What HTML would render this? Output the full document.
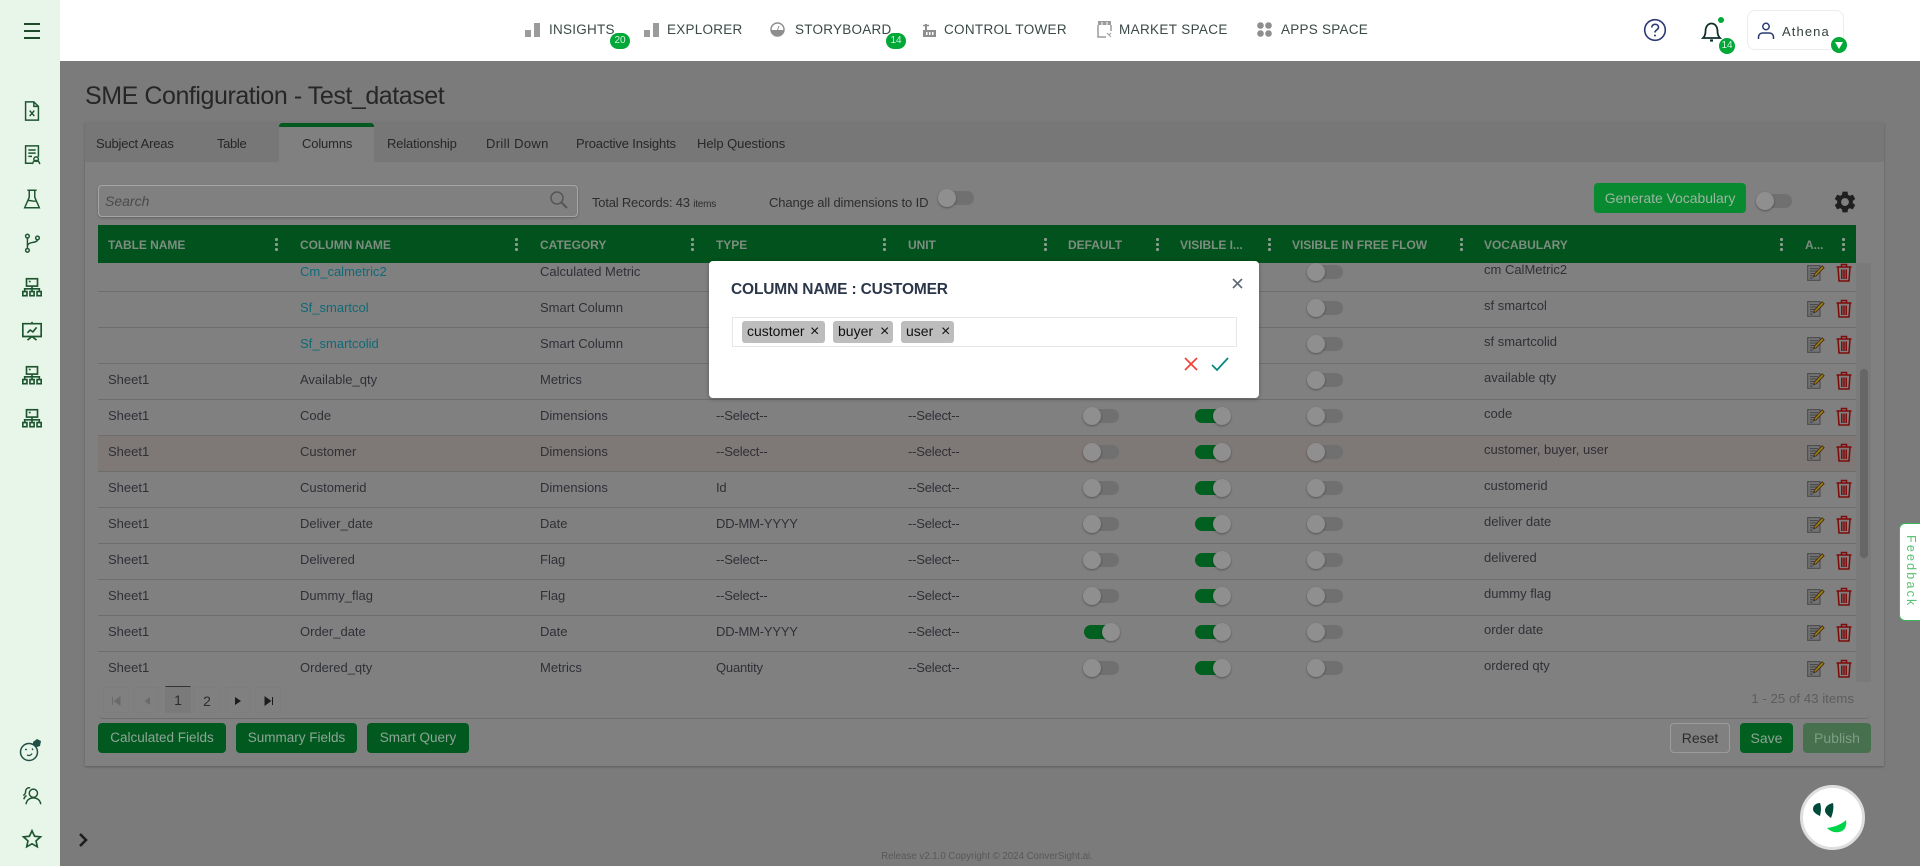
<!DOCTYPE html>
<html lang="en"><head><meta charset="utf-8"><title>SME Configuration</title>
<style>
*{box-sizing:border-box}
html,body{margin:0;padding:0;width:1920px;height:866px;overflow:hidden;background:#7b7b7b;font-family:"Liberation Sans",sans-serif}
.a{position:absolute;white-space:nowrap}
#side{left:0;top:0;width:60px;height:866px;background:#e8f5e9}
#head{left:0;top:0;width:1920px;height:61px;background:#fff}
.nav{top:21px;font-size:13.5px;line-height:18px;color:#3b4a47;letter-spacing:.25px}
.badge{background:#00a838;color:#d5f0dc;font-size:10px;line-height:16px;height:16px;width:20px;border-radius:8px;text-align:center}
.panel{left:85px;top:122px;width:1799px;height:644px;background:#808080;box-shadow:0 1px 2px rgba(0,0,0,.25)}
.tabbar{left:85px;top:122px;width:1799px;height:40px;background:#777}
.tab{top:135px;font-size:13px;line-height:18px;color:#272727;letter-spacing:-.15px}
.hd{left:98px;top:225px;width:1758px;height:38px;background:#01521c}
.ht{top:237px;font-size:12px;line-height:16px;font-weight:700;color:#7d8d80;letter-spacing:-.05px}
.dots{top:238px;width:3px;height:13px;background:radial-gradient(circle 1.5px at 1.5px 1.5px,#8a9a8e 98%,transparent) 0 0/3px 5px repeat-y}
#body{left:98px;top:263px;width:1758px;height:419px;overflow:hidden}
.r{position:absolute;left:0;width:1758px;height:36px;border-top:1.5px solid #6e6e6e;color:#2f3036;font-size:13px}
.r span{position:absolute;top:8px;line-height:16px;white-space:nowrap}
.c1{left:10px}.c2{left:202px}.c3{left:442px}.c4{left:618px;letter-spacing:-.2px}.c5{left:810px;letter-spacing:-.2px}
.r span.c6{left:1386px;top:6px}
.lk{color:#0f6a78}
.hl{background:#7e7876}
.t{position:absolute;top:9px;width:35px;height:14px;border-radius:7px;background:#707070}
.t i{position:absolute;left:-1px;top:-2px;width:18px;height:18px;border-radius:50%;background:#8f8f8f;box-shadow:0 1px 2px rgba(0,0,0,.35)}
.t.on{background:#015f1f}
.t.on i{left:18px}
.t1{left:986px}.t2{left:1097px}.t3{left:1210px}
.ed{position:absolute;left:1709px;top:7px;width:18px;height:18px}
.tr{position:absolute;left:1738px;top:7px;width:16px;height:19px}
.btn{height:30px;line-height:30px;border-radius:4px;text-align:center;font-size:14px;background:#01591f;color:#8fa596}
.pg{top:687px;width:26px;height:26px;border:1px solid #7d7d7d;text-align:center;line-height:26px;font-size:14px;color:#2c2c2c}
.chip{top:321px;height:22px;background:#bdbdbd;border-radius:3px;font-size:14px;line-height:21px;color:#111;padding-left:5px}
.chip b{position:absolute;top:0;font-weight:400;font-size:16px}
svg{display:block;overflow:visible}
.si{position:absolute;left:21px;width:22px;height:22px;fill:none;stroke:#1d5530;stroke-width:1.6}
</style></head><body>

<svg width="0" height="0" style="position:absolute">
<defs>
<symbol id="org" viewBox="0 0 24 24"><g fill="none" stroke="#1d5530" stroke-width="1.8"><rect x="6" y="3" width="12" height="8"/><path d="M12 11v3M4 17v-3h16v3M12 14v3"/><rect x="2" y="17" width="4.5" height="4.5"/><rect x="9.8" y="17" width="4.5" height="4.5"/><rect x="17.5" y="17" width="4.5" height="4.5"/><path d="M8.5 6h2"/></g></symbol>
<symbol id="edit" viewBox="0 0 19 19"><rect x=".7" y="2.7" width="13" height="15.6" fill="#737373" stroke="#4d4d4d" stroke-width="1.2"/><path d="M3 6h9M3 8.500h8M3 11h5M3 13.500h4M3 16h3" stroke="#3d3d3d" stroke-width="1"/><path d="M7 14.500l1-3L16 3l2 2-8.500 8.500z" fill="#9a8410" stroke="#4a2f18" stroke-width="1"/></symbol>
<symbol id="trash" viewBox="0 0 16 19"><g fill="none" stroke="#7e0a0a" stroke-width="1.500"><path d="M.5 4h15M5.500 4V1.500h5V4M2 4.500l1 13.500h10l1-13.500M5.800 6.500v9.500M8 6.500v9.500M10.200 6.500v9.500"/></g></symbol>
</defs></svg>

<div class="a" id="bg" style="left:60px;top:61px;width:1860px;height:805px;background:#7b7b7b"></div>
<div class="a panel"></div>
<div class="a tabbar"></div>
<div class="a" style="left:279px;top:123px;width:95px;height:39px;background:#808080"></div>
<div class="a" style="left:279px;top:123px;width:95px;height:4px;background:#01591f;border-radius:3px 3px 0 0"></div>

<div class="a" style="left:85px;top:80px;font-size:25px;line-height:32px;color:#262626;letter-spacing:-.44px">SME Configuration - Test_dataset</div>

<div class="a tab" style="left:96px;letter-spacing:-.2px">Subject Areas</div>
<div class="a tab" style="left:217px;letter-spacing:-.35px">Table</div>
<div class="a tab" style="left:302px">Columns</div>
<div class="a tab" style="left:387px">Relationship</div>
<div class="a tab" style="left:486px;letter-spacing:.35px">Drill Down</div>
<div class="a tab" style="left:576px">Proactive Insights</div>
<div class="a tab" style="left:697px;letter-spacing:-.05px">Help Questions</div>

<div class="a" style="left:98px;top:185px;width:480px;height:32px;border:1px solid #a5a5a5;border-radius:4px;box-shadow:0 1px 2px rgba(0,0,0,.25)"></div>
<div class="a" style="left:105px;top:192px;font-size:14px;line-height:18px;font-style:italic;color:#4a4a4a">Search</div>
<svg class="a" style="left:549px;top:190px" width="20" height="20" viewBox="0 0 20 20"><circle cx="8" cy="8" r="6" fill="none" stroke="#555" stroke-width="1.500"/><path d="M12.500 12.500L18 18" stroke="#555" stroke-width="2"/></svg>
<div class="a" style="left:592px;top:194px;font-size:13px;line-height:18px;color:#2d2d2d;letter-spacing:-.2px">Total Records: 43 <span style="font-size:10px">items</span></div>
<div class="a" style="left:769px;top:194px;font-size:13px;line-height:18px;color:#2d2d2d;letter-spacing:-.12px">Change all dimensions to ID</div>
<div class="a" style="left:939px;top:191px;width:35px;height:14px;border-radius:7px;background:#707070"></div>
<div class="a" style="left:938px;top:189px;width:18px;height:18px;border-radius:50%;background:#8f8f8f;box-shadow:0 1px 2px rgba(0,0,0,.35)"></div>

<div class="a btn" style="left:1594px;top:183px;width:152px;background:#088a30;color:#9cb5a2;letter-spacing:-.05px">Generate Vocabulary</div>
<div class="a" style="left:1757px;top:194px;width:35px;height:14px;border-radius:7px;background:#707070"></div>
<div class="a" style="left:1756px;top:192px;width:18px;height:18px;border-radius:50%;background:#8f8f8f;box-shadow:0 1px 2px rgba(0,0,0,.35)"></div>
<svg class="a" style="left:1832px;top:189px" width="26" height="26" viewBox="0 0 24 24"><path fill="#1f1f1f" d="M19.140 12.940c.04-.3.06-.61.06-.94 0-.32-.02-.64-.07-.94l2.030-1.580c.18-.14.23-.41.12-.61l-1.920-3.320c-.12-.22-.37-.29-.59-.22l-2.390.96c-.5-.38-1.030-.7-1.620-.94l-.36-2.540c-.04-.24-.24-.41-.48-.41h-3.840c-.24 0-.43.17-.47.41l-.36 2.540c-.59.24-1.130.57-1.620.94l-2.390-.96c-.22-.08-.47 0-.59.22L2.740 8.870c-.12.21-.08.47.12.61l2.030 1.580c-.05.3-.09.63-.09.94s.02.64.07.94l-2.030 1.580c-.18.14-.23.41-.12.61l1.920 3.320c.12.22.37.29.59.22l2.390-.96c.5.38 1.030.7 1.620.94l.36 2.540c.05.24.24.41.48.41h3.840c.24 0 .44-.17.47-.41l.36-2.540c.59-.24 1.130-.56 1.620-.94l2.390.96c.22.08.47 0 .59-.22l1.920-3.320c.12-.22.07-.47-.12-.61l-2.010-1.580zM12 15.600c-1.980 0-3.600-1.620-3.600-3.600s1.620-3.600 3.600-3.600 3.600 1.620 3.600 3.600-1.620 3.600-3.600 3.600z"/></svg>

<div class="a hd"></div>
<div class="a ht" style="left:108px">TABLE NAME</div><div class="a dots" style="left:275px"></div>
<div class="a ht" style="left:300px">COLUMN NAME</div><div class="a dots" style="left:515px"></div>
<div class="a ht" style="left:540px">CATEGORY</div><div class="a dots" style="left:691px"></div>
<div class="a ht" style="left:716px">TYPE</div><div class="a dots" style="left:883px"></div>
<div class="a ht" style="left:908px">UNIT</div><div class="a dots" style="left:1044px"></div>
<div class="a ht" style="left:1068px">DEFAULT</div><div class="a dots" style="left:1156px"></div>
<div class="a ht" style="left:1180px">VISIBLE I...</div><div class="a dots" style="left:1268px"></div>
<div class="a ht" style="left:1292px">VISIBLE IN FREE FLOW</div><div class="a dots" style="left:1460px"></div>
<div class="a ht" style="left:1484px">VOCABULARY</div><div class="a dots" style="left:1780px"></div>
<div class="a ht" style="left:1805px">A...</div><div class="a dots" style="left:1842px"></div>

<div class="a" style="left:1856px;top:263px;width:15px;height:420px;background:#7a7a7a"></div>
<div class="a" style="left:1860px;top:369px;width:8px;height:189px;border-radius:4px;background:#666"></div>

<div class="a" id="body">
<div class="r" style="top:-8px"><span class="c2 lk">Cm_calmetric2</span><span class="c3">Calculated Metric</span><span class="c6">cm CalMetric2</span><div class="t t3"><i></i></div><svg class="ed"><use href="#edit"/></svg><svg class="tr"><use href="#trash"/></svg></div>
<div class="r" style="top:28px"><span class="c2 lk">Sf_smartcol</span><span class="c3">Smart Column</span><span class="c6">sf smartcol</span><div class="t t3"><i></i></div><svg class="ed"><use href="#edit"/></svg><svg class="tr"><use href="#trash"/></svg></div>
<div class="r" style="top:64px"><span class="c2 lk">Sf_smartcolid</span><span class="c3">Smart Column</span><span class="c6">sf smartcolid</span><div class="t t3"><i></i></div><svg class="ed"><use href="#edit"/></svg><svg class="tr"><use href="#trash"/></svg></div>
<div class="r" style="top:100px"><span class="c1">Sheet1</span><span class="c2">Available_qty</span><span class="c3">Metrics</span><span class="c6">available qty</span><div class="t t3"><i></i></div><svg class="ed"><use href="#edit"/></svg><svg class="tr"><use href="#trash"/></svg></div>
<div class="r" style="top:136px"><span class="c1">Sheet1</span><span class="c2">Code</span><span class="c3">Dimensions</span><span class="c4">--Select--</span><span class="c5">--Select--</span><span class="c6">code</span><div class="t t1"><i></i></div><div class="t t2 on"><i></i></div><div class="t t3"><i></i></div><svg class="ed"><use href="#edit"/></svg><svg class="tr"><use href="#trash"/></svg></div>
<div class="r hl" style="top:172px"><span class="c1">Sheet1</span><span class="c2">Customer</span><span class="c3">Dimensions</span><span class="c4">--Select--</span><span class="c5">--Select--</span><span class="c6">customer, buyer, user</span><div class="t t1"><i></i></div><div class="t t2 on"><i></i></div><div class="t t3"><i></i></div><svg class="ed"><use href="#edit"/></svg><svg class="tr"><use href="#trash"/></svg></div>
<div class="r" style="top:208px"><span class="c1">Sheet1</span><span class="c2">Customerid</span><span class="c3">Dimensions</span><span class="c4">Id</span><span class="c5">--Select--</span><span class="c6">customerid</span><div class="t t1"><i></i></div><div class="t t2 on"><i></i></div><div class="t t3"><i></i></div><svg class="ed"><use href="#edit"/></svg><svg class="tr"><use href="#trash"/></svg></div>
<div class="r" style="top:244px"><span class="c1">Sheet1</span><span class="c2">Deliver_date</span><span class="c3">Date</span><span class="c4">DD-MM-YYYY</span><span class="c5">--Select--</span><span class="c6">deliver date</span><div class="t t1"><i></i></div><div class="t t2 on"><i></i></div><div class="t t3"><i></i></div><svg class="ed"><use href="#edit"/></svg><svg class="tr"><use href="#trash"/></svg></div>
<div class="r" style="top:280px"><span class="c1">Sheet1</span><span class="c2">Delivered</span><span class="c3">Flag</span><span class="c4">--Select--</span><span class="c5">--Select--</span><span class="c6">delivered</span><div class="t t1"><i></i></div><div class="t t2 on"><i></i></div><div class="t t3"><i></i></div><svg class="ed"><use href="#edit"/></svg><svg class="tr"><use href="#trash"/></svg></div>
<div class="r" style="top:316px"><span class="c1">Sheet1</span><span class="c2">Dummy_flag</span><span class="c3">Flag</span><span class="c4">--Select--</span><span class="c5">--Select--</span><span class="c6">dummy flag</span><div class="t t1"><i></i></div><div class="t t2 on"><i></i></div><div class="t t3"><i></i></div><svg class="ed"><use href="#edit"/></svg><svg class="tr"><use href="#trash"/></svg></div>
<div class="r" style="top:352px"><span class="c1">Sheet1</span><span class="c2">Order_date</span><span class="c3">Date</span><span class="c4">DD-MM-YYYY</span><span class="c5">--Select--</span><span class="c6">order date</span><div class="t t1 on"><i></i></div><div class="t t2 on"><i></i></div><div class="t t3"><i></i></div><svg class="ed"><use href="#edit"/></svg><svg class="tr"><use href="#trash"/></svg></div>
<div class="r" style="top:388px"><span class="c1">Sheet1</span><span class="c2">Ordered_qty</span><span class="c3">Metrics</span><span class="c4">Quantity</span><span class="c5">--Select--</span><span class="c6">ordered qty</span><div class="t t1"><i></i></div><div class="t t2 on"><i></i></div><div class="t t3"><i></i></div><svg class="ed"><use href="#edit"/></svg><svg class="tr"><use href="#trash"/></svg></div>
</div>

<div class="a" style="left:98px;top:682px;width:1773px;height:37px;background:#808080;border-bottom:1.5px solid #6e6e6e;border-radius:0 0 5px 5px"></div>
<div class="a pg" style="left:103px"><svg style="margin:8px 0 0 7px" width="10" height="10" viewBox="0 0 10 10"><path d="M1.500 1v8M9 1L3.500 5 9 9z" stroke="#6a6a6a" fill="#6a6a6a"/></svg></div>
<div class="a pg" style="left:133px"><svg style="margin:8px 0 0 8px" width="10" height="10" viewBox="0 0 10 10"><path d="M8 1L2.500 5 8 9z" fill="#6a6a6a"/></svg></div>
<div class="a pg" style="left:165px;background:#7a7a7a;border-color:#7a7a7a;border-top:1px solid #333;top:686px;height:27px">1</div>
<div class="a pg" style="left:194px">2</div>
<div class="a pg" style="left:225px"><svg style="margin:8px 0 0 7px" width="10" height="10" viewBox="0 0 10 10"><path d="M2 1L8 5 2 9z" fill="#1c1c1c"/></svg></div>
<div class="a pg" style="left:255px"><svg style="margin:8px 0 0 8px" width="10" height="10" viewBox="0 0 10 10"><path d="M8.500 1v8M1 1L6.500 5 1 9z" stroke="#1c1c1c" fill="#1c1c1c"/></svg></div>
<div class="a" style="left:1700px;width:154px;text-align:right;top:691px;font-size:13.3px;line-height:16px;color:#5c5c5c">1 - 25 of 43 items</div>

<div class="a btn" style="left:98px;top:723px;width:128px;font-size:13.5px">Calculated Fields</div>
<div class="a btn" style="left:236px;top:723px;width:121px;font-size:13.5px">Summary Fields</div>
<div class="a btn" style="left:367px;top:723px;width:102px;font-size:13.5px">Smart Query</div>
<div class="a btn" style="left:1670px;top:723px;width:60px;background:transparent;border:1px solid #9c9c9c;line-height:28px;color:#2c2c2c">Reset</div>
<div class="a btn" style="left:1740px;top:723px;width:53px;background:#015f1f">Save</div>
<div class="a btn" style="left:1803px;top:723px;width:68px;background:#47704f;color:#7f9c87">Publish</div>

<div class="a" style="left:787px;width:400px;text-align:center;top:851px;font-size:9.7px;line-height:12px;color:#585858">Release v2.1.0 Copyright © 2024 ConverSight.ai.</div>
<svg class="a" style="left:78px;top:832px" width="11" height="16" viewBox="0 0 11 16"><path d="M2 2l6 6-6 6" fill="none" stroke="#1d1d1d" stroke-width="2.600"/></svg>

<div class="a" style="left:1800px;top:785px;width:65px;height:65px;border-radius:50%;background:#fff;border:3.5px solid #dedede"></div>
<svg class="a" style="left:1810px;top:800px" width="42" height="36" viewBox="0 0 42 36"><path d="M10 3C6 3 3 5.500 3 9c0 3 3 5 7 7 1-4 1.500-9 0-13zM23 3c-5 1-8 4-8 7.500 0 3 3 5 6 7.500 2-5 3-10 2-15z" fill="#004a3c"/><path d="M3 27c8-1 15-4 19-8 1 6-1 11-7 12-5 1-9-1-12-4z" transform="translate(14 1)" fill="#00d448"/></svg>

<div class="a" style="left:1899px;top:523px;width:30px;height:98px;background:#fff;border:1.500px solid #3cb65a;border-radius:6px"></div>
<div class="a" style="left:1875px;top:564px;width:72px;text-align:center;transform:rotate(90deg);font-size:12.500px;line-height:14px;letter-spacing:2.2px;color:#5cc274">Feedback</div>

<div class="a" style="left:709px;top:261px;width:550px;height:137px;background:#fff;border-radius:4px;box-shadow:0 1px 4px rgba(0,0,0,.3)"></div>
<div class="a" style="left:731px;top:281px;font-size:15.5px;line-height:18px;font-weight:700;color:#2b3648;letter-spacing:-.15px">COLUMN NAME : CUSTOMER</div>
<svg class="a" style="left:1232px;top:278px" width="11" height="11" viewBox="0 0 11 11"><path d="M1 1l9 9M10 1l-9 9" stroke="#5f6b78" stroke-width="1.700"/></svg>
<div class="a" style="left:732px;top:317px;width:505px;height:30px;border:1px solid #e6e6e6"></div>
<div class="a chip" style="left:742px;width:83px">customer<b style="left:68px">×</b></div>
<div class="a chip" style="left:833px;width:60px">buyer<b style="left:47px">×</b></div>
<div class="a chip" style="left:901px;width:53px">user<b style="left:40px">×</b></div>
<svg class="a" style="left:1184px;top:357px" width="14" height="14" viewBox="0 0 14 14"><path d="M1 1l12 12M13 1L1 13" stroke="#f44336" stroke-width="1.700"/></svg>
<svg class="a" style="left:1211px;top:357px" width="18" height="14" viewBox="0 0 18 14"><path d="M1 8l5 5L17 1" fill="none" stroke="#00897b" stroke-width="1.700"/></svg>

<div class="a" id="side" style="box-shadow:none"></div>
<div class="a" style="left:24px;top:23px;width:16px;height:2px;background:#1c4a2b"></div>
<div class="a" style="left:24px;top:30px;width:16px;height:2px;background:#1c4a2b"></div>
<div class="a" style="left:24px;top:37px;width:16px;height:2px;background:#1c4a2b"></div>
<svg class="si" style="top:100px" viewBox="0 0 24 24"><path d="M5 2h9l5 5v15H5z M14 2v5h5 M9.500 11.500l5 6M14.500 11.500l-5 6"/></svg>
<svg class="si" style="top:144px" viewBox="0 0 24 24"><path d="M12 21H5V2h14v12M8 6.500h8M8 10h8M8 13.500h4"/><circle cx="16.500" cy="16.500" r="2.500"/><path d="M12.500 22c.5-3 2-4 4-4s3.500 1 4 4"/></svg>
<svg class="si" style="top:188px" viewBox="0 0 24 24"><path d="M7 2.500h10M9 3v7L4 21.500h16L15 10V3M7 14c3-1.500 6 1.500 10 0"/></svg>
<svg class="si" style="top:232px" viewBox="0 0 24 24"><circle cx="7" cy="4.500" r="2"/><circle cx="7" cy="20" r="2"/><circle cx="18" cy="6.500" r="2"/><path d="M7 6.500V18M7 16c0-3 2-4 5-4.500s6-1 6-3"/></svg>
<svg class="a" style="left:21px;top:276px" width="22" height="22"><use href="#org"/></svg>
<svg class="si" style="top:320px" viewBox="0 0 24 24"><path d="M2 4h20v14H2zM12 2v2M12 18l-5 4M12 18l5 4M7 14l3-3 3 2 4-5" stroke-width="1.800"/></svg>
<svg class="a" style="left:21px;top:364px" width="22" height="22"><use href="#org"/></svg>
<svg class="a" style="left:21px;top:407px" width="22" height="22"><use href="#org"/></svg>
<svg class="a" style="left:18px;top:737px" width="26" height="26" viewBox="0 0 26 26"><circle cx="11" cy="15" r="8.500" fill="none" stroke="#1f4f45" stroke-width="1.500"/><path d="M7 12.500h2M9 18c2 1 4 .5 5-1.500M14 11.500l1 1.500" stroke="#1f4f45" stroke-width="1.300" fill="none"/><path d="M15 5l4-3 4 2-1 5-3 1-4-2z" fill="#1f4f45"/></svg>
<svg class="si" style="top:785px" viewBox="0 0 24 24"><circle cx="13.500" cy="9" r="4.500"/><path d="M5.500 21c.5-4.500 4-7 8-7s7.500 2.500 8 7M10 3.200C7 2.500 5 4.500 5 7.500c0 1.500-1 3-2.500 4M6 11.500c-1.500 1-2.500 2.500-3 4"/></svg>
<svg class="si" style="top:828px" viewBox="0 0 24 24"><path d="M12 3l2.800 6 6.500.7-4.900 4.400 1.400 6.400-5.800-3.300-5.800 3.300 1.400-6.400-4.900-4.400 6.500-.7z" stroke-width="1.800"/></svg>

<div class="a" id="head" style="left:60px;width:1860px"></div>
<svg class="a" style="left:525px;top:23px" width="15" height="14"><path d="M0 7h6v7H0zM9 0h6v14H9z" fill="#9b9b9b"/></svg>
<div class="a nav" style="left:549px">INSIGHTS</div>
<div class="a badge" style="left:610px;top:33px">20</div>
<svg class="a" style="left:644px;top:23px" width="15" height="14"><path d="M0 7h6v7H0zM9 0h6v14H9z" fill="#9b9b9b"/></svg>
<div class="a nav" style="left:667px">EXPLORER</div>
<svg class="a" style="left:770px;top:22px" width="15" height="15" viewBox="0 0 15 15"><circle cx="7.500" cy="7.500" r="6.500" fill="#fff" stroke="#8e8e8e" stroke-width="1.500"/><path d="M1 8h13a6.500 6.500 0 0 1-13 0z" fill="#8e8e8e"/><path d="M7.500 8L9 4" stroke="#8e8e8e"/></svg>
<div class="a nav" style="left:795px">STORYBOARD</div>
<div class="a badge" style="left:886px;top:33px">14</div>
<svg class="a" style="left:922px;top:21px" width="15" height="16" viewBox="0 0 15 16"><path d="M1 9h13v7H1zM3 3h2v6H3zM1 4.500h6" fill="#8e8e8e"/><path d="M4 11h1.500v3H4zM7 11h1.500v3H7zM10 11h1.500v3H10z" fill="#fff"/><path d="M1 4.500h6" stroke="#8e8e8e" stroke-width="1.500"/></svg>
<div class="a nav" style="left:944px;letter-spacing:.3px">CONTROL TOWER</div>
<svg class="a" style="left:1097px;top:20px" width="15" height="18" viewBox="0 0 15 18"><path d="M1 1h13v4H1z" fill="#9b9b9b"/><path d="M1 5v12h8M14 5v6" fill="none" stroke="#9b9b9b" stroke-width="1.500"/><path d="M5 2v3M10 2v3" stroke="#fff"/><path d="M10 13l4 4M14 13l-2 2" stroke="#9b9b9b"/></svg>
<div class="a nav" style="left:1119px;letter-spacing:.35px">MARKET SPACE</div>
<svg class="a" style="left:1257px;top:22px" width="15" height="15"><circle cx="3.500" cy="3.500" r="3.300" fill="#8e8e8e"/><circle cx="11.500" cy="3.500" r="3.300" fill="#8e8e8e"/><circle cx="3.500" cy="11.500" r="3.300" fill="#8e8e8e"/><circle cx="11.500" cy="11.500" r="3.300" fill="#8e8e8e"/></svg>
<div class="a nav" style="left:1281px">APPS SPACE</div>

<svg class="a" style="left:1643px;top:18px" width="24" height="24" viewBox="0 0 24 24"><circle cx="12" cy="12" r="10.300" fill="none" stroke="#2b3a73" stroke-width="1.600"/><path d="M8.700 9.500c.2-2 1.600-3.200 3.400-3.200 2 0 3.400 1.300 3.400 2.900 0 2.700-3.500 2.700-3.500 5.300" fill="none" stroke="#2b3a73" stroke-width="1.600"/><circle cx="12" cy="17.500" r="1" fill="#2b3a73"/></svg>
<svg class="a" style="left:1702px;top:21px" width="20" height="22" viewBox="0 0 20 22"><path d="M1 17h17c-2-2-2.500-3.500-2.500-6.500 0-5-2.500-8-6-8s-6 3-6 8C3.500 13.500 3 15 1 17z" fill="none" stroke="#0e2f2a" stroke-width="1.800"/><path d="M8 19.500h3" stroke="#0e2f2a" stroke-width="2.200"/></svg>
<div class="a" style="left:1718px;top:17px;width:6px;height:6px;border-radius:50%;background:#00a838"></div>
<div class="a badge" style="left:1719px;top:38px;width:16px">14</div>
<div class="a" style="left:1747px;top:10px;width:97px;height:40px;background:#fff;border:1px solid #ececec;border-radius:8px"></div>
<svg class="a" style="left:1757px;top:22px" width="18" height="18" viewBox="0 0 18 18"><circle cx="9" cy="4.500" r="3.200" fill="none" stroke="#2b3a73" stroke-width="1.500"/><path d="M1.500 17v-2c0-2.500 2-4 4-4h7c2 0 4 1.500 4 4v2" fill="none" stroke="#2b3a73" stroke-width="1.500"/></svg>
<div class="a" style="left:1782px;top:23px;font-size:13px;line-height:18px;color:#33423f;letter-spacing:1.1px">Athena</div>
<div class="a" style="left:1831px;top:37px;width:16px;height:16px;border-radius:50%;background:#00a838"></div>
<svg class="a" style="left:1835px;top:42px" width="8" height="7"><path d="M0 0h8L4 7z" fill="#fff"/></svg>

</body></html>
